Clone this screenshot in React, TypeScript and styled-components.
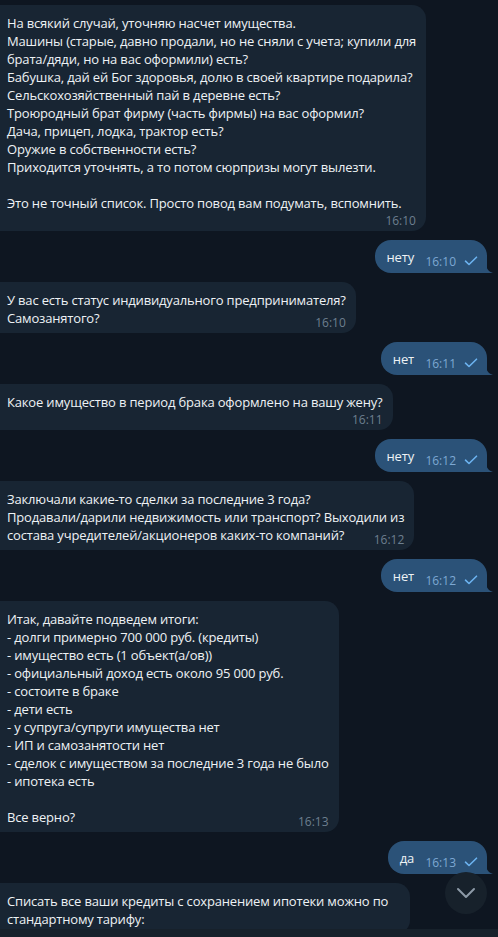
import { createGlobalStyle, styled } from "styled-components";

interface IMessage {
  text: string;
  time: string;
  out?: boolean;
  metaBelow?: boolean;
  minWidth?: number;
}

const messages: IMessage[] = [
  {
    text: `На всякий случай, уточняю насчет имущества.
Машины (старые, давно продали, но не сняли с учета; купили для
брата/дяди, но на вас оформили) есть?
Бабушка, дай ей Бог здоровья, долю в своей квартире подарила?
Сельскохозяйственный пай в деревне есть?
Троюродный брат фирму (часть фирмы) на вас оформил?
Дача, прицеп, лодка, трактор есть?
Оружие в собственности есть?
Приходится уточнять, а то потом сюрпризы могут вылезти.

Это не точный список. Просто повод вам подумать, вспомнить.`,
    time: "16:10",
    metaBelow: true,
  },
  { text: "нету", time: "16:10", out: true },
  {
    text: `У вас есть статус индивидуального предпринимателя?
Самозанятого?`,
    time: "16:10",
  },
  { text: "нет", time: "16:11", out: true },
  {
    text: "Какое имущество в период брака оформлено на вашу жену?",
    time: "16:11",
    metaBelow: true,
  },
  { text: "нету", time: "16:12", out: true },
  {
    text: `Заключали какие-то сделки за последние 3 года?
Продавали/дарили недвижимость или транспорт? Выходили из
состава учредителей/акционеров каких-то компаний?`,
    time: "16:12",
  },
  { text: "нет", time: "16:12", out: true },
  {
    text: `Итак, давайте подведем итоги:
- долги примерно 700 000 руб. (кредиты)
- имущество есть (1 объект(а/ов))
- официальный доход есть около 95 000 руб.
- состоите в браке
- дети есть
- у супруга/супруги имущества нет
- ИП и самозанятости нет
- сделок с имуществом за последние 3 года не было
- ипотека есть

Все верно?`,
    time: "16:13",
  },
  { text: "да", time: "16:13", out: true },
  {
    text: `Списать все ваши кредиты с сохранением ипотеки можно по
стандартному тарифу:`,
    time: "",
    minWidth: 410,
  },
];

const GlobalStyle = createGlobalStyle`
  html, body {
    margin: 0;
    padding: 0;
    background: #0e1621;
  }
  body {
    font-family: "Open Sans", "Noto Sans", sans-serif;
    -webkit-font-smoothing: antialiased;
  }
`;

const Screen = styled.div`
  position: relative;
  width: 498px;
  height: 937px;
  overflow: hidden;
  background: #0e1621;
  display: flex;
  flex-direction: column;
`;

const History = styled.div`
  flex: 1;
  min-height: 0;
  overflow: hidden;
  display: flex;
  flex-direction: column;
  gap: 9px;
  padding: 5px 11px 0 0;
`;

const Row = styled.div<{ $out?: boolean }>`
  display: flex;
  justify-content: ${(p) => (p.$out ? "flex-end" : "flex-start")};
`;

const Bubble = styled.div<{ $out?: boolean; $minWidth?: number }>`
  position: relative;
  flex: none;
  box-sizing: border-box;
  min-width: ${(p) => (p.$minWidth ? `${p.$minWidth}px` : "0")};
  background: ${(p) => (p.$out ? "#2b5278" : "#182533")};
  border-radius: ${(p) => (p.$out ? "16px 16px 0 16px" : "0 14px 14px 0")};
  padding: ${(p) => (p.$out ? "8px 9px 7px 12px" : "9px 10px 6px 7px")};
  color: #eef2f5;
  font-size: 13px;
  line-height: 18px;
  letter-spacing: -0.17px;
`;

const Text = styled.div`
  white-space: pre;
`;

const Spacer = styled.span<{ $w: number; $below?: boolean }>`
  display: ${(p) => (p.$below ? "block" : "inline-block")};
  width: ${(p) => p.$w}px;
  height: ${(p) => (p.$below ? "13px" : "1px")};
`;

const Meta = styled.div<{ $out?: boolean }>`
  position: absolute;
  right: ${(p) => (p.$out ? "9px" : "10px")};
  bottom: ${(p) => (p.$out ? "4px" : "3px")};
  display: flex;
  align-items: center;
  gap: 8px;
  font-size: 12px;
  line-height: 14px;
  letter-spacing: 0;
  color: ${(p) => (p.$out ? "#7da8d3" : "#6d7f8f")};
`;

const Tail = styled.svg`
  position: absolute;
  right: -6px;
  bottom: 0;
  width: 7px;
  height: 10px;
`;

const Check = styled.svg`
  width: 14px;
  height: 10px;
  margin-top: -3px;
`;

const ScrollDown = styled.button`
  position: absolute;
  right: 11px;
  bottom: 23px;
  width: 42px;
  height: 42px;
  border-radius: 50%;
  border: none;
  padding: 0;
  background: #17212b;
  display: flex;
  align-items: center;
  justify-content: center;
`;

const BottomStrip = styled.div`
  flex: none;
  height: 8px;
  background: #17212b;
`;

function MessageBubble({ text, time, out, metaBelow, minWidth }: IMessage) {
  return (
    <Row $out={out}>
      <Bubble $out={out} $minWidth={minWidth}>
        <Text>
          {text}
          {time && <Spacer $w={out ? 64 : 38} $below={metaBelow} />}
        </Text>
        {time && (
          <Meta $out={out}>
            <span>{time}</span>
            {out && (
              <Check viewBox="0 0 14 10">
                <path
                  d="M1.5 5.2 L5 8.5 L12.5 1.2"
                  fill="none"
                  stroke="#6cb3f0"
                  strokeWidth="1.6"
                  strokeLinecap="round"
                  strokeLinejoin="round"
                />
              </Check>
            )}
          </Meta>
        )}
        {out && (
          <Tail viewBox="0 0 7 10">
            <path d="M0 0 C0 5 2 8.5 7 10 L0 10 Z" fill="#2b5278" />
          </Tail>
        )}
      </Bubble>
    </Row>
  );
}

export default function App() {
  return (
    <Screen>
      <GlobalStyle />
      <History>
        {messages.map((m, i) => (
          <MessageBubble key={i} {...m} />
        ))}
      </History>
      <BottomStrip />
      <ScrollDown>
        <svg width="20" height="12" viewBox="0 0 20 12">
          <path
            d="M2 2 L10 10 L18 2"
            fill="none"
            stroke="#8d9aa7"
            strokeWidth="2"
            strokeLinecap="round"
            strokeLinejoin="round"
          />
        </svg>
      </ScrollDown>
    </Screen>
  );
}
